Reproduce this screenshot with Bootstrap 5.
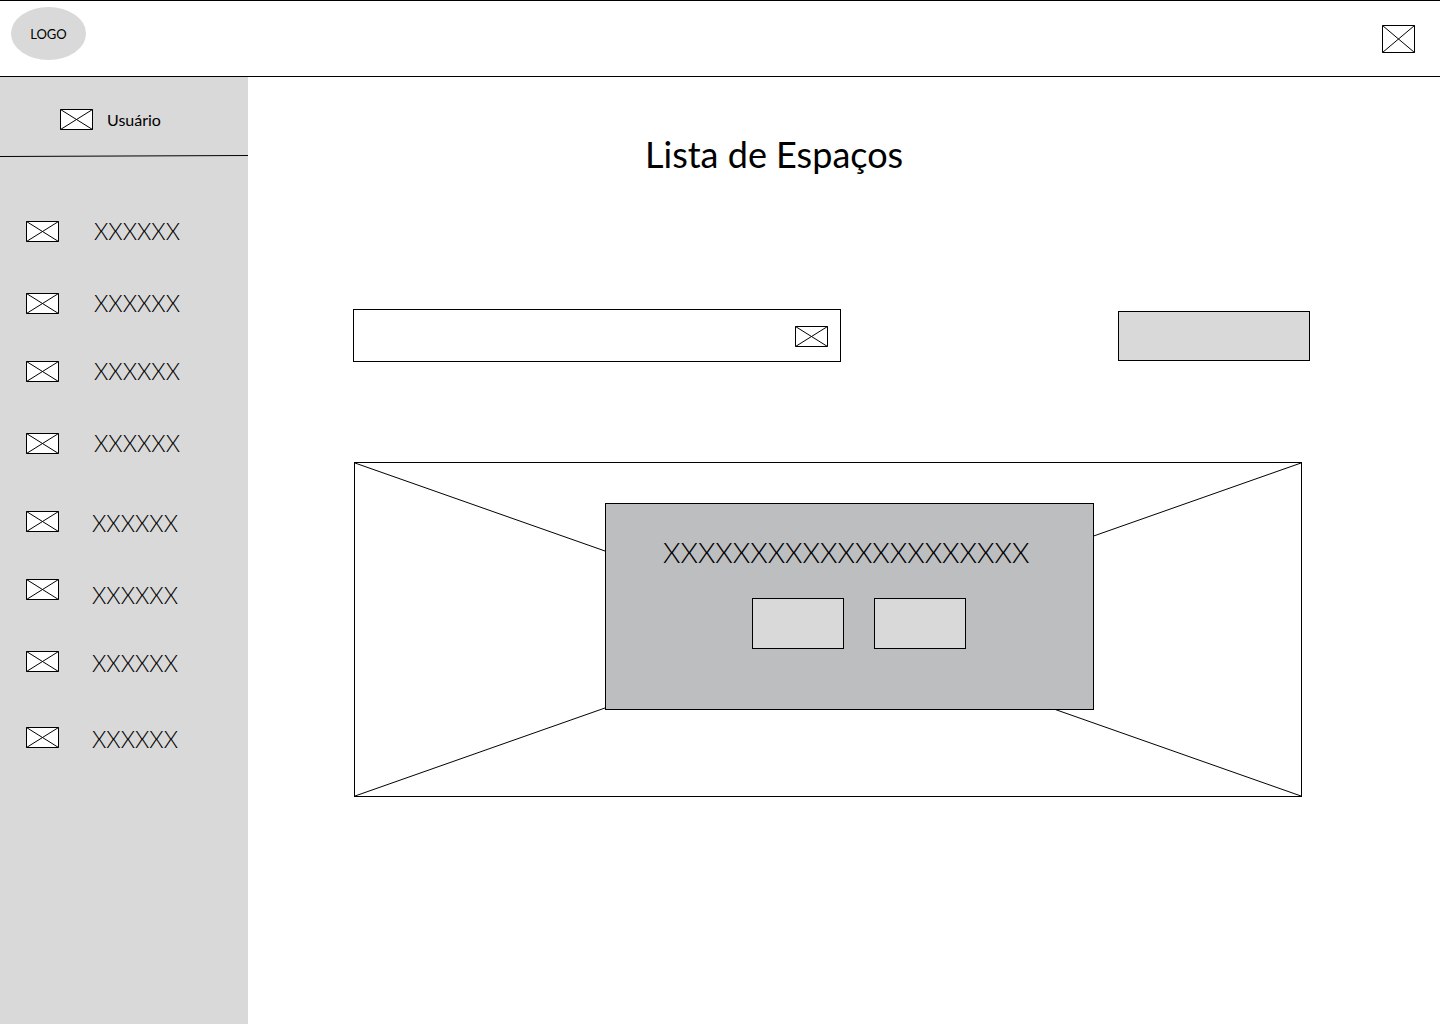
<!DOCTYPE html>
<html lang="pt-BR">
<head>
<meta charset="utf-8">
<meta name="viewport" content="width=device-width, initial-scale=1">
<title>Lista de Espaços</title>
<link href="https://cdn.jsdelivr.net/npm/bootstrap@5.3.0/dist/css/bootstrap.min.css" rel="stylesheet">
<style>
  :root { --ink: #000; --fill: #d9d9d9; --panel: #bdbec0; }
  body { color: var(--ink); background: #fff; font-family: Lato, sans-serif; }
  .topbar { height: 77px; border-top: 1px solid var(--ink); border-bottom: 1px solid var(--ink); padding: 6px 25px 16px 11px; }
  .brand-oval { width: 75px; height: 53px; background: var(--fill); border-radius: 50%; color: var(--ink); font-size: 13px; line-height: 20px; }
  .top-action { margin-top: 10px; }
  .user-name { font-size: 16px; line-height: 24px; }
  .page-title { font-size: 36px; line-height: 48px; font-weight: 400; padding-left: 292px; }
  .ph { display: block; width: 33px; height: 21px; flex: none; }
  .ph-tall { height: 28px; }
  .ph-shape { fill: #fff; stroke: #000; }
  .sidebar { width: 248px; background: var(--fill); }
  .user-row { height: 78px; padding: 7px 0 0 60px; gap: 14px; }
  .rule-line { display: block; width: 100%; height: 2px; }
  .menu { padding-top: 58px; }
  .menu a { height: 32px; padding-left: 26px; gap: 35px; color: var(--ink); font-size: 23px; line-height: 32px; font-weight: 300; }
  .menu .menu-alt a { gap: 33px; }
  .menu-alt .ph { margin-bottom: 4px; }
  .after-36 { margin-bottom: 36px; }
  .after-40 { margin-bottom: 40px; }
  .after-44 { margin-bottom: 44px; }
  .after-48 { margin-bottom: 48px; }
  .content { padding: 53px 130px 40px 105px; }
  .tools { margin-top: 131px; }
  .search { width: 488px; height: 53px; border: 1px solid var(--ink); padding: 1px 12px 0 0; }
  .search input { min-width: 0; outline-offset: -2px; }
  .flat { background: var(--fill); border: 1px solid var(--ink); border-radius: 0; }
  .flat-wide { width: 192px; height: 50px; }
  .flat-small { width: 92px; height: 51px; }
  .frame { margin: 100px 8px 0 1px; height: 335px; border: 1px solid var(--ink); padding: 40px 0 0 250px; }
  .frame-lines { position: absolute; inset: 0; width: 100%; height: 100%; }
  .panel { width: 489px; height: 207px; background: var(--panel); border: 1px solid var(--ink); padding-top: 28px; }
  .panel-text { font-size: 28px; line-height: 40px; font-weight: 300; padding-left: 57px; margin: 0; }
  .panel-actions { padding: 26px 0 0 146px; gap: 30px; }
</style>
</head>
<body class="d-flex flex-column min-vh-100">
<svg class="d-none" aria-hidden="true">
  <symbol id="box" viewBox="0 0 33 21"><path class="ph-shape" d="M.5.5h32v20H.5zL32.5 20.5M.5 20.5l32-20"/></symbol>
  <symbol id="box-tall" viewBox="0 0 33 28"><path class="ph-shape" d="M.5.5h32v27H.5zL32.5 27.5M.5 27.5l32-27"/></symbol>
</svg>

<header class="topbar d-flex justify-content-between align-items-center">
  <a href="#" class="brand-oval d-flex align-items-center justify-content-center text-decoration-none">LOGO</a>
  <button type="button" class="btn top-action p-0 border-0 rounded-0" aria-label="Menu"><svg class="ph ph-tall"><use href="#box-tall"/></svg></button>
</header>

<div class="d-flex flex-grow-1">
  <aside class="sidebar flex-shrink-0">
    <div class="user-row d-flex align-items-center">
      <svg class="ph" aria-hidden="true"><use href="#box"/></svg>
      <span class="user-name">Usuário</span>
    </div>
    <svg class="rule-line" viewBox="0 0 248 2" preserveAspectRatio="none" aria-hidden="true"><path d="M0 1.5L248 .5" stroke="#000"/></svg>
    <nav class="menu">
      <ul class="list-unstyled m-0">
        <li class="after-40"><a href="#" class="d-flex align-items-center text-decoration-none"><svg class="ph"><use href="#box"/></svg>XXXXXX</a></li>
        <li class="after-36"><a href="#" class="d-flex align-items-center text-decoration-none"><svg class="ph"><use href="#box"/></svg>XXXXXX</a></li>
        <li class="after-40"><a href="#" class="d-flex align-items-center text-decoration-none"><svg class="ph"><use href="#box"/></svg>XXXXXX</a></li>
        <li class="after-48"><a href="#" class="d-flex align-items-center text-decoration-none"><svg class="ph"><use href="#box"/></svg>XXXXXX</a></li>
      </ul>
      <ul class="menu-alt list-unstyled m-0">
        <li class="after-40"><a href="#" class="d-flex align-items-center text-decoration-none"><svg class="ph"><use href="#box"/></svg>XXXXXX</a></li>
        <li class="after-36"><a href="#" class="d-flex align-items-start text-decoration-none"><svg class="ph"><use href="#box"/></svg>XXXXXX</a></li>
        <li class="after-44"><a href="#" class="d-flex align-items-center text-decoration-none"><svg class="ph"><use href="#box"/></svg>XXXXXX</a></li>
        <li><a href="#" class="d-flex align-items-center text-decoration-none"><svg class="ph"><use href="#box"/></svg>XXXXXX</a></li>
      </ul>
    </nav>
  </aside>

  <main class="content flex-grow-1">
    <h1 class="page-title m-0">Lista de Espaços</h1>
    <div class="tools d-flex justify-content-between align-items-center">
      <form class="search d-flex align-items-center" role="search">
        <input type="search" class="flex-grow-1 h-100 border-0 bg-transparent px-3" aria-label="Buscar">
        <button type="submit" class="btn p-0 border-0 rounded-0" aria-label="Buscar"><svg class="ph"><use href="#box"/></svg></button>
      </form>
      <button type="button" class="btn flat flat-wide" aria-label="Adicionar"></button>
    </div>
    <section class="frame position-relative">
      <svg class="frame-lines" viewBox="0 0 946 333" preserveAspectRatio="none" aria-hidden="true"><path d="M0 0L946 333M0 333L946 0" stroke="#000" fill="none"/></svg>
      <div class="panel position-relative">
        <p class="panel-text">XXXXXXXXXXXXXXXXXXXXX</p>
        <div class="panel-actions d-flex">
          <button type="button" class="btn flat flat-small" aria-label="Editar"></button>
          <button type="button" class="btn flat flat-small" aria-label="Excluir"></button>
        </div>
      </div>
    </section>
  </main>
</div>
<script src="https://cdn.jsdelivr.net/npm/bootstrap@5.3.0/dist/js/bootstrap.bundle.min.js"></script>
</body>
</html>
